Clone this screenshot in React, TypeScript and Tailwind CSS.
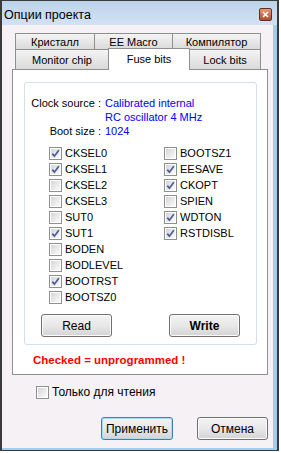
import React from 'react';

const leftBits = [
  { name: 'CKSEL0', on: true },
  { name: 'CKSEL1', on: true },
  { name: 'CKSEL2', on: false },
  { name: 'CKSEL3', on: false },
  { name: 'SUT0', on: false },
  { name: 'SUT1', on: true },
  { name: 'BODEN', on: false },
  { name: 'BODLEVEL', on: false },
  { name: 'BOOTRST', on: true },
  { name: 'BOOTSZ0', on: false },
];

const rightBits = [
  { name: 'BOOTSZ1', on: false },
  { name: 'EESAVE', on: true },
  { name: 'CKOPT', on: true },
  { name: 'SPIEN', on: false },
  { name: 'WDTON', on: true },
  { name: 'RSTDISBL', on: true },
];

function Box({ checked }: { checked?: boolean }) {
  return (
    <span className="w-[13px] h-[13px] border border-[#8f8f8f] bg-white p-px shrink-0 flex">
      <span className="flex-1 bg-gradient-to-br from-[#d6d6d6] to-[#fbfbfb] flex items-center justify-center">
        {checked && (
          <svg width="9" height="9" viewBox="0 0 9 9">
            <path d="M1.3 4.6 L3.4 7.2 L7.8 1.2" fill="none" stroke="#4a5d96" strokeWidth="1.7" />
          </svg>
        )}
      </span>
    </span>
  );
}

function Check({ name, on }: { name: string; on: boolean }) {
  return (
    <div className="h-[16px] flex items-center gap-[3px]">
      <Box checked={on} />
      <span>{name}</span>
    </div>
  );
}

function Button({ label, bold, primary, width }: { label: string; bold?: boolean; primary?: boolean; width: string }) {
  return (
    <button
      className={`${width} h-[23px] rounded-[3px] border ${
        primary ? 'border-[#3c7fb1] shadow-[inset_0_0_0_1px_#a8dcf5]' : 'border-[#707070] shadow-[inset_0_0_0_1px_#fbfbfb]'
      } bg-gradient-to-b from-[#f3f3f3] via-[#e8e8e8] to-[#d4d4d4] text-black text-[12px] leading-none ${bold ? 'font-bold' : 'font-normal'}`}
    >
      {label}
    </button>
  );
}

function Tab({ label, width, first }: { label: string; width: string; first?: boolean }) {
  return (
    <div
      className={`${width} ${first ? '' : '-ml-px'} h-full border border-b-0 border-[#8e8f8f] bg-gradient-to-b from-[#f4f4f4] to-[#dadada] flex items-center justify-center`}
    >
      {label}
    </div>
  );
}

export default function App() {
  return (
    <div className="w-[281px] h-[453px] bg-white font-['Liberation_Sans',Arial,sans-serif] text-[11px] leading-[14px] text-black">
      <div className="w-[279px] h-[451px] border-l-2 border-t border-r-2 border-b border-[#3a3a3a] flex flex-col">
        {/* Title bar */}
        <div className="h-[24px] shrink-0 bg-gradient-to-b from-[#bcd3eb] to-[#d2e2f3] flex items-center justify-between pl-[2px] pr-[5px]">
          <span className="text-[12.5px] mt-[3px]">Опции проекта</span>
          <span className="w-[13px] h-[13px] mt-[2px] rounded-[2px] border border-[#5e3024] bg-gradient-to-b from-[#e09a7c] to-[#b5492b] flex items-center justify-center">
            <svg width="7" height="7" viewBox="0 0 7 7">
              <path d="M1 1 L6 6 M6 1 L1 6" stroke="#ffffff" strokeWidth="1.6" />
            </svg>
          </span>
        </div>

        {/* Client area */}
        <div className="flex-1 bg-[#f6f1f5] border-r-4 border-b-2 border-[#a3cdee] pl-[10px] flex flex-col">
          {/* Tabs */}
          <div className="pl-[3px] pt-[8px] flex flex-col">
            <div className="h-[16px] flex">
              <Tab label="Кристалл" width="w-[80px]" first />
              <Tab label="EE Macro" width="w-[79px]" />
              <Tab label="Компилятор" width="w-[89px]" />
            </div>
            <div className="h-[20px] flex items-end">
              <div className="w-[94px] h-[20px] border border-b-0 border-[#8e8f8f] bg-gradient-to-b from-[#f4f4f4] to-[#dadada] flex items-center justify-center">
                Monitor chip
              </div>
              <div className="-ml-px w-[82px] h-[22px] -mb-px relative z-10 border border-b-0 border-[#8e8f8f] bg-white flex items-start justify-center pt-[3px] -mt-[2px]">
                Fuse bits
              </div>
              <div className="-ml-px w-[72px] h-[20px] border border-b-0 border-[#8e8f8f] bg-gradient-to-b from-[#f4f4f4] to-[#dadada] flex items-center justify-center">
                Lock bits
              </div>
            </div>
          </div>

          {/* Tab panel */}
          <div className="w-[256px] h-[306px] border border-[#8e8f8f] bg-white flex flex-col">
            <div className="mt-[12px] ml-[11px] w-[233px] h-[263px] border border-[#d5dfe6] rounded-[3px] flex flex-col">
              <div className="mt-[13px] grid grid-cols-[76px_1fr] gap-x-[4px]">
                <span className="text-right">Clock source :</span>
                <span className="text-[#0000ff]">Calibrated internal</span>
                <span></span>
                <span className="text-[#0000ff]">RC oscillator 4 MHz</span>
                <span className="text-right">Boot size :</span>
                <span className="text-[#0000ff]">1024</span>
              </div>

              <div className="mt-[7px] pl-[24px] flex">
                <div className="w-[115px] flex flex-col">
                  {leftBits.map(b => (
                    <Check key={b.name} name={b.name} on={b.on} />
                  ))}
                </div>
                <div className="flex flex-col">
                  {rightBits.map(b => (
                    <Check key={b.name} name={b.name} on={b.on} />
                  ))}
                </div>
              </div>

              <div className="mt-[9px] pl-[16px] flex gap-[57px]">
                <Button label="Read" width="w-[71px]" />
                <Button label="Write" width="w-[71px]" bold />
              </div>
            </div>

            <div className="mt-[8px] ml-[20px] text-[#ff0000] font-bold text-[11.5px]">Checked = unprogrammed !</div>
          </div>

          {/* Read-only checkbox */}
          <div className="mt-[9px] ml-[24px] h-[16px] flex items-center gap-[3px] text-[12px]">
            <Box />
            <span>Только для чтения</span>
          </div>

          {/* Dialog buttons */}
          <div className="mt-[17px] ml-[89px] flex gap-[24px]">
            <Button label="Применить" width="w-[72px]" primary />
            <Button label="Отмена" width="w-[71px]" />
          </div>
        </div>
      </div>
    </div>
  );
}
